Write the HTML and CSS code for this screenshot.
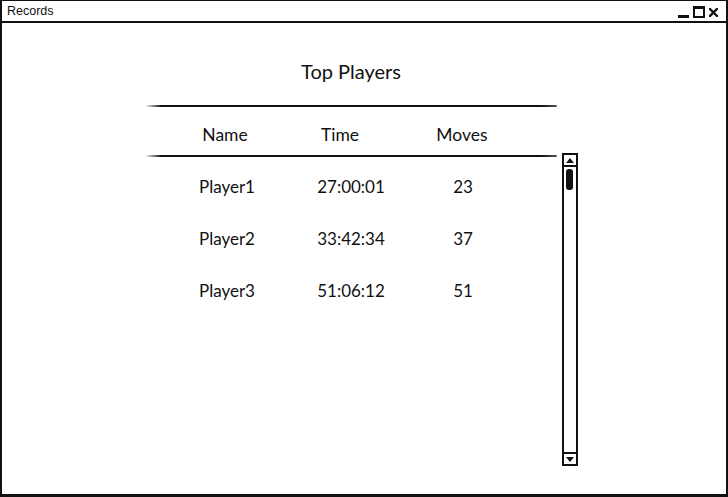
FILE: index.html
```html
<!DOCTYPE html>
<html lang="en">
<head>
  <meta charset="UTF-8">
  <title>Records</title>
  <link rel="stylesheet" href="styles.css">
</head>
<body>
  <div class="window">
    <div class="titlebar">
      <span class="title">Records</span>
      <div class="controls">
        <span class="min"></span>
        <span class="max"></span>
        <svg class="close" width="9" height="9" viewBox="0 0 9 9">
          <path d="M1 1L8 8M8 1L1 8" stroke="#111" stroke-width="2.4" stroke-linecap="square"/>
        </svg>
      </div>
    </div>

    <div class="content">
      <div class="records">
        <h2 class="heading">Top Players</h2>
        <div class="rule"></div>
        <div class="row head">
          <span>Name</span>
          <span>Time</span>
          <span>Moves</span>
        </div>
        <div class="rule"></div>
        <div class="row">
          <span>Player1</span>
          <span>27:00:01</span>
          <span>23</span>
        </div>
        <div class="row">
          <span>Player2</span>
          <span>33:42:34</span>
          <span>37</span>
        </div>
        <div class="row">
          <span>Player3</span>
          <span>51:06:12</span>
          <span>51</span>
        </div>
      </div>

      <div class="scrollbar">
        <div class="arrow up"></div>
        <div class="track"><div class="thumb"></div></div>
        <div class="arrow down"></div>
      </div>
    </div>
  </div>
</body>
</html>
```

FILE: styles.css
```css
body {
  margin: 0;
  background: #fff;
  font-family: Lato, "Open Sans", sans-serif;
  color: #111;
}
.window {
  width: 728px;
  height: 497px;
  box-sizing: border-box;
  border: 2px solid #111;
  border-top-width: 1px;
  border-bottom-width: 3px;
  display: flex;
  flex-direction: column;
}
.titlebar {
  height: 20px;
  border-bottom: 2px solid #111;
  display: flex;
  align-items: center;
  justify-content: space-between;
  padding: 0 8px 0 5px;
}
.title {
  font-family: "Liberation Sans", Arial, sans-serif;
  font-size: 12.5px;
}
.controls {
  display: flex;
  align-items: flex-end;
  gap: 4px;
  height: 13px;
  padding-top: 2px;
}
.min {
  width: 11px;
  height: 3px;
  background: #111;
  margin-bottom: 1px;
}
.max {
  width: 8px;
  height: 7px;
  border: 2px solid #111;
  border-top-width: 3px;
  margin-bottom: 1px;
}
.close {
  display: block;
  margin-bottom: 2px;
}
.content {
  flex: 1;
  display: flex;
  align-items: flex-start;
  padding-left: 143px;
}
.records {
  width: 412px;
}
.heading {
  margin: 36px 0 22px;
  font-size: 20px;
  line-height: 24px;
  font-weight: normal;
  text-align: center;
}
.rule {
  height: 2px;
  background: linear-gradient(to right, #fff, #111 4%, #111 96%, #555);
  border-radius: 1px;
}
.row {
  display: grid;
  grid-template-columns: 164px 84px 140px;
  font-size: 17px;
  line-height: 52px;
  text-align: center;
}
.row.head {
  grid-template-columns: 160px 70px 174px;
  font-size: 17.5px;
  line-height: 20px;
  padding: 18px 0 10px;
}
.rule + .row:not(.head) {
  margin-top: 4px;
}
.scrollbar {
  margin: 130px 0 0 5px;
  width: 16px;
  height: 313px;
  box-sizing: border-box;
  border: 2px solid #111;
  display: flex;
  flex-direction: column;
}
.arrow {
  height: 10px;
  display: flex;
  justify-content: center;
  align-items: center;
}
.arrow.up {
  border-bottom: 2px solid #111;
}
.arrow.down {
  border-top: 2px solid #111;
}
.arrow.up::before,
.arrow.down::before {
  content: "";
  border-left: 4px solid transparent;
  border-right: 4px solid transparent;
}
.arrow.up::before {
  border-bottom: 5px solid #111;
}
.arrow.down::before {
  border-top: 5px solid #111;
}
.track {
  flex: 1;
  padding: 2px 0 0 2px;
}
.thumb {
  width: 7px;
  height: 21px;
  background: #111;
  border-radius: 3px;
}
```
